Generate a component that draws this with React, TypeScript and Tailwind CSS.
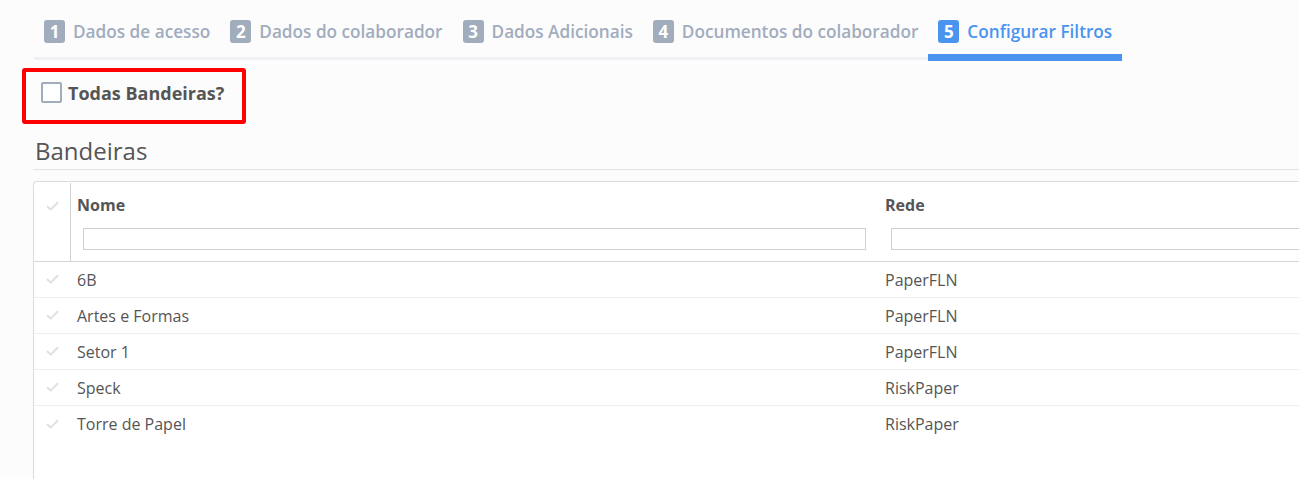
import { Check } from "lucide-react"

const tabs = [
  { n: 1, label: "Dados de acesso" },
  { n: 2, label: "Dados do colaborador" },
  { n: 3, label: "Dados Adicionais" },
  { n: 4, label: "Documentos do colaborador" },
  { n: 5, label: "Configurar Filtros", active: true },
]

const rows = [
  { nome: "6B", rede: "PaperFLN" },
  { nome: "Artes e Formas", rede: "PaperFLN" },
  { nome: "Setor 1", rede: "PaperFLN" },
  { nome: "Speck", rede: "RiskPaper" },
  { nome: "Torre de Papel", rede: "RiskPaper" },
]

export default function App() {
  return (
    <div className="w-[1299px] h-[479px] overflow-hidden bg-[#fcfcfd] font-['Open_Sans',sans-serif] text-[#555]">
      {/* wizard steps */}
      <ul className="mt-[20px] ml-[34px] inline-flex items-start border-b-[3px] border-[#eff1f4]">
        {tabs.map((t) => (
          <li
            key={t.n}
            className={
              t.active
                ? "flex items-center px-[10px] pb-[11px] border-b-[7px] border-[#4a94f0] -mb-[4px] text-[#4a94f0]"
                : "flex items-center px-[10px] pb-[14px] text-[#a1acbd]"
            }
          >
            <span
              className={
                t.active
                  ? "flex h-[23px] w-[21px] items-center justify-center rounded-[3px] bg-[#4a94f0] text-[17px] font-bold text-white"
                  : "flex h-[23px] w-[21px] items-center justify-center rounded-[3px] bg-[#a1acbd] text-[17px] font-bold text-white"
              }
            >
              {t.n}
            </span>
            <span className="ml-[8px] text-[17.2px] font-semibold leading-[23px]">{t.label}</span>
          </li>
        ))}
      </ul>

      {/* todas bandeiras */}
      <div className="mt-[8px] ml-[22px] flex h-[56px] w-[224px] items-end rounded-[3px] border-4 border-[#ff0000] pb-[17px] pl-[15px]">
        <span className="h-[21px] w-[21px] rounded-[2px] border-2 border-[#a1acbd] bg-white" />
        <span className="ml-[6px] text-[18px] font-bold leading-[20px] text-[#555]">Todas Bandeiras?</span>
      </div>

      {/* bandeiras */}
      <h2 className="mt-[11px] ml-[33px] border-b border-[#e3e3e3] pb-[2px] pl-[2px] text-[24px] font-normal leading-[32px] text-[#555]">
        Bandeiras
      </h2>

      <div className="mt-[11px] ml-[33px] w-[1400px] h-[320px] rounded-tl-[4px] border-t border-l border-[#dcdcdc] bg-white">
        <div className="flex border-b border-[#d6d6d6]">
          <div className="mt-[1px] flex w-[37px] shrink-0 justify-center border-r border-[#cfcfcf] pt-[16px]">
            <Check size={15} strokeWidth={3} className="text-[#e0e0e0]" />
          </div>
          <div className="w-[807px] shrink-0 pt-[11px] pb-[11px]">
            <div className="pl-[6px] text-[16px] font-bold leading-[24px]">Nome</div>
            <input className="mt-[11px] ml-[12px] block h-[22px] w-[783px] border border-[#cfcfcf] bg-white" />
          </div>
          <div className="min-w-0 flex-1 pt-[11px] pb-[11px]">
            <div className="pl-[7px] text-[16px] font-bold leading-[24px]">Rede</div>
            <input className="mt-[11px] ml-[13px] block h-[22px] w-[600px] border border-[#cfcfcf] bg-white" />
          </div>
        </div>
        {rows.map((r, i) => (
          <div
            key={r.nome}
            className={
              i < rows.length - 1
                ? "flex h-[36px] items-center border-b border-[#efefef] text-[16px]"
                : "flex h-[36px] items-center text-[16px]"
            }
          >
            <div className="flex w-[37px] shrink-0 justify-center">
              <Check size={15} strokeWidth={3} className="text-[#e0e0e0]" />
            </div>
            <div className="w-[807px] shrink-0 pl-[6px]">{r.nome}</div>
            <div className="min-w-0 flex-1 pl-[7px]">{r.rede}</div>
          </div>
        ))}
      </div>
    </div>
  )
}
